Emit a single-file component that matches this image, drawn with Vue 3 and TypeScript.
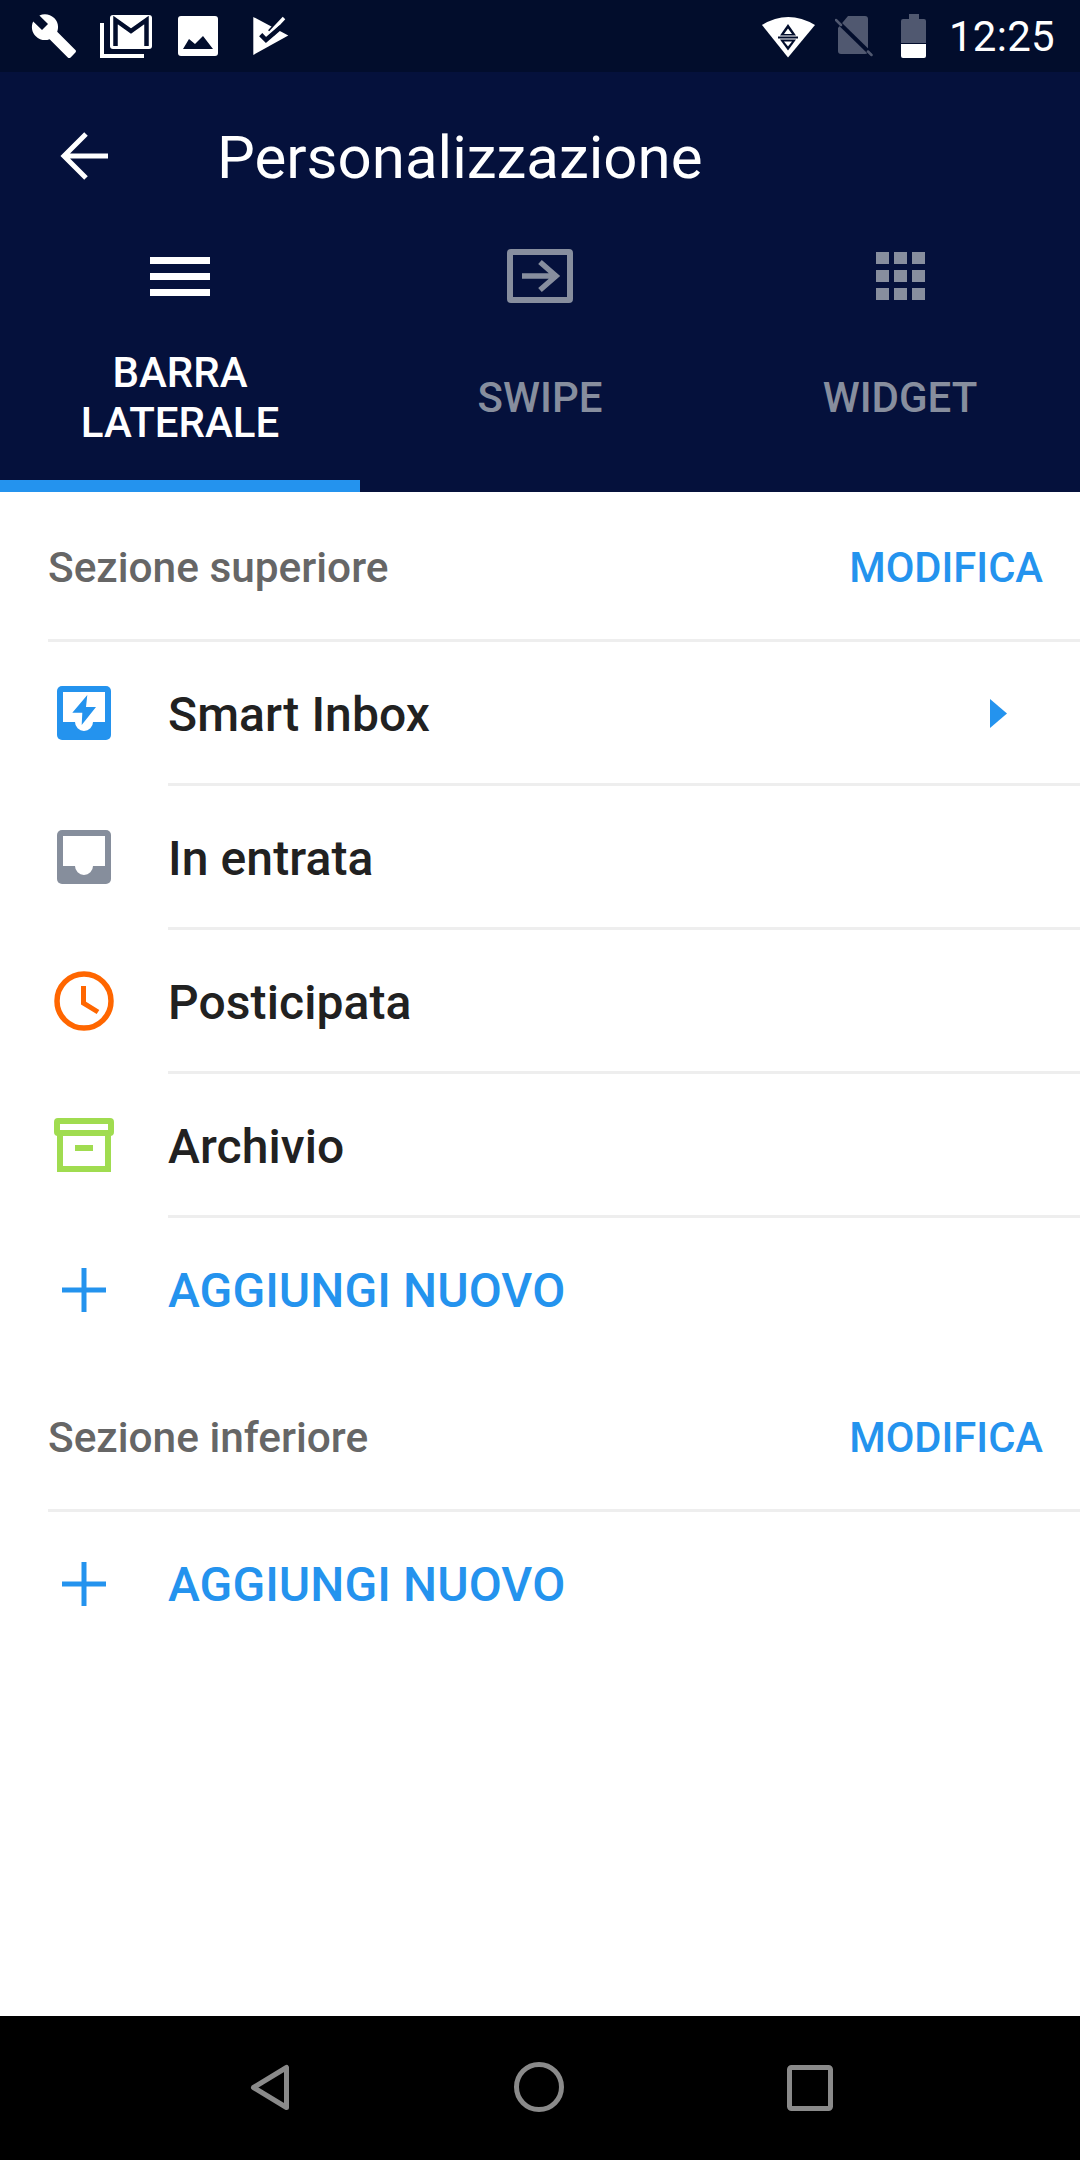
<script setup lang="ts">
interface MenuItem {
  id: string;
  label: string;
  hasArrow?: boolean;
}

const topItems: MenuItem[] = [
  { id: 'smart', label: 'Smart Inbox', hasArrow: true },
  { id: 'inbox', label: 'In entrata' },
  { id: 'snooze', label: 'Posticipata' },
  { id: 'archive', label: 'Archivio' },
];
</script>

<template>
  <div class="page">
    <div class="status-bar">
      <div class="status-left">
        <svg class="st-wrench" width="48" height="48" viewBox="0 0 24 24">
          <path fill="#fff" d="M22.7 19l-9.1-9.1c.9-2.3.4-5-1.5-6.9-2-2-5-2.4-7.4-1.3L9 6 6 9 1.6 4.7C.4 7.1.9 10.1 2.9 12.1c1.9 1.9 4.6 2.4 6.9 1.5l9.1 9.1c.4.4 1 .4 1.4 0l2.3-2.3c.5-.4.5-1.1.1-1.4z" />
        </svg>
        <svg class="st-gmail" width="52" height="44" viewBox="0 0 52 44">
          <path fill="none" stroke="#fff" stroke-width="4" d="M2 9V42H44" />
          <rect x="10" y="1" width="42" height="34" rx="3" fill="#fff" />
          <path fill="none" stroke="#020d2c" stroke-width="4.5" d="M15.5 32V6L31 17 46.500 6V32" />
        </svg>
        <svg class="st-image" width="40" height="40" viewBox="0 0 40 40">
          <rect width="40" height="40" rx="3" fill="#fff" />
          <path fill="#020d2c" d="M5 33 11 23 17 28 25 20 35 33Z" />
        </svg>
        <svg class="st-check" width="38" height="40" viewBox="0 0 38 40">
          <path fill="#fff" d="M1.300 1 36.300 19.500 1.300 39Z" />
          <path fill="none" stroke="#020d2c" stroke-width="8" d="M31 4 19 17" />
          <path fill="none" stroke="#fff" stroke-width="3.500" d="M32 2 18 17" />
          <path fill="none" stroke="#020d2c" stroke-width="4.500" d="M8.700 18.700 14 24 29 11" />
        </svg>
      </div>
      <div class="status-right">
        <svg class="st-wifi" width="53" height="43" viewBox="0 0 53 43">
          <path fill="#fff" d="M0 10Q26-6 53 10L26 42.500Z" />
          <path fill="#020d2c" d="M26 9 34 20.500H18Z" />
          <path fill="#fff" d="M26 13.500 30 19H22Z" />
          <rect x="16" y="21.500" width="20" height="2" fill="#020d2c" />
          <path fill="#020d2c" d="M18 24.500H34L26 35.500Z" />
          <path fill="#fff" d="M22 26.500H30L26 31.500Z" />
        </svg>
        <svg class="st-sim" width="38" height="44" viewBox="0 0 38 44">
          <path fill="#505870" d="M13 2H30Q33 2 33 5V37Q33 40 30 40H6Q3 40 3 37V14Z" />
          <path fill="none" stroke="#020d2c" stroke-width="4" d="M0 5 37 41" />
          <path fill="none" stroke="#505870" stroke-width="2.500" stroke-linecap="round" d="M1 6 6 11M33 37.500 36.500 41" />
        </svg>
        <svg class="st-battery" width="25" height="44" viewBox="0 0 25 44">
          <path fill="#505870" d="M8 0H18V5H23Q25 5 25 7V29H0V7Q0 5 2 5H8Z" />
          <path fill="#fff" d="M0 30H25V42Q25 44 23 44H2Q0 44 0 42Z" />
        </svg>
        <span class="time">12:25</span>
      </div>
    </div>

    <div class="toolbar">
      <svg class="back" width="48" height="48" viewBox="0 0 48 48">
        <path fill="none" stroke="#fff" stroke-width="5" d="M48 24H4M26 2 4 24 26 46" />
      </svg>
      <span class="title">Personalizzazione</span>
    </div>

    <div class="tabs">
      <div class="tab active">
        <div class="tab-icon">
          <svg width="60" height="39" viewBox="0 0 60 39">
            <path fill="#fff" d="M0 0H60V7H0ZM0 16H60V23H0ZM0 32H60V39H0Z" />
          </svg>
        </div>
        <div class="tab-label">BARRA<br />LATERALE</div>
      </div>
      <div class="tab">
        <div class="tab-icon">
          <svg width="66" height="54" viewBox="0 0 66 54">
            <rect x="3" y="3" width="60" height="48" rx="1" fill="none" stroke="#878e9e" stroke-width="6" />
            <path fill="none" stroke="#878e9e" stroke-width="5.500" d="M15 27H49M33 13 49 27 33 41" />
          </svg>
        </div>
        <div class="tab-label">SWIPE</div>
      </div>
      <div class="tab">
        <div class="tab-icon">
          <svg width="49" height="48" viewBox="0 0 49 48">
            <path fill="#878e9e" d="M0 0H13V12H0ZM18 0H31V12H18ZM36 0H49V12H36ZM0 18H13V30H0ZM18 18H31V30H18ZM36 18H49V30H36ZM0 36H13V48H0ZM18 36H31V48H18ZM36 36H49V48H36Z" />
          </svg>
        </div>
        <div class="tab-label">WIDGET</div>
      </div>
    </div>

    <div class="content">
      <div class="section-head">
        <span class="section-title">Sezione superiore</span>
        <span class="section-action">MODIFICA</span>
      </div>
      <div v-for="item in topItems" :key="item.id" class="row">
        <div class="row-icon">
          <svg v-if="item.id === 'smart'" width="54" height="54" viewBox="0 0 54 54">
            <rect width="54" height="54" rx="5" fill="#2493ee" />
            <path fill="#fff" d="M6 6H48V36H36A9 9 0 0 1 18 36H6Z" />
            <path fill="#2493ee" d="M30.300 9 15.300 26.700H25.300L24.700 39 39 21H29Z" />
          </svg>
          <svg v-else-if="item.id === 'inbox'" width="54" height="54" viewBox="0 0 54 54">
            <rect width="54" height="54" rx="5" fill="#868e9c" />
            <path fill="#fff" d="M6 6H48V36H36A9 9 0 0 1 18 36H6Z" />
          </svg>
          <svg v-else-if="item.id === 'snooze'" width="60" height="60" viewBox="0 0 60 60">
            <circle cx="30" cy="30" r="27" fill="none" stroke="#ff6600" stroke-width="5.500" />
            <path fill="none" stroke="#ff6600" stroke-width="5" d="M29.500 15V32L44 41" />
          </svg>
          <svg v-else width="60" height="54" viewBox="0 0 60 54">
            <rect x="3" y="3" width="54" height="12" rx="1" fill="none" stroke="#a0dc50" stroke-width="6" />
            <path fill="none" stroke="#a0dc50" stroke-width="6" d="M6 16V51H54V16" />
            <rect x="21" y="27" width="18" height="6" fill="#a0dc50" />
          </svg>
        </div>
        <div class="row-body">
          <span class="row-label">{{ item.label }}</span>
          <svg v-if="item.hasArrow" class="row-arrow" width="17" height="29" viewBox="0 0 17 29">
            <path fill="#2493ee" d="M0 0 17 14.500 0 29Z" />
          </svg>
        </div>
      </div>
      <div class="row add">
        <div class="row-icon">
          <svg width="44" height="44" viewBox="0 0 44 44">
            <path fill="none" stroke="#2493ee" stroke-width="5" d="M22 0V44M0 22H44" />
          </svg>
        </div>
        <span class="add-label">AGGIUNGI NUOVO</span>
      </div>

      <div class="section-head">
        <span class="section-title">Sezione inferiore</span>
        <span class="section-action">MODIFICA</span>
      </div>
      <div class="row add">
        <div class="row-icon">
          <svg width="44" height="44" viewBox="0 0 44 44">
            <path fill="none" stroke="#2493ee" stroke-width="5" d="M22 0V44M0 22H44" />
          </svg>
        </div>
        <span class="add-label">AGGIUNGI NUOVO</span>
      </div>
    </div>

    <div class="nav-bar">
      <svg width="60" height="52" viewBox="0 0 60 52">
        <path fill="none" stroke="#8a8a8a" stroke-width="5" stroke-linejoin="round" d="M13.500 25.500 46.500 5.500V45.500Z" />
      </svg>
      <svg width="60" height="52" viewBox="0 0 60 52">
        <circle cx="29" cy="25" r="22.500" fill="none" stroke="#8a8a8a" stroke-width="5" />
      </svg>
      <svg width="60" height="52" viewBox="0 0 60 52">
        <rect x="9.500" y="5.500" width="41" height="41" rx="2" fill="none" stroke="#8a8a8a" stroke-width="5" />
      </svg>
    </div>
  </div>
</template>

<style scoped>
.page {
  display: flex;
  flex-direction: column;
  width: 1080px;
  height: 2160px;
  background: #fff;
  font-family: Roboto, sans-serif;
  overflow: hidden;
}

svg {
  display: block;
  flex: none;
}

.status-bar {
  display: flex;
  justify-content: space-between;
  align-items: center;
  height: 72px;
  padding: 0 25px 0 30px;
  background: #020d2c;
}

.status-left,
.status-right {
  display: flex;
  align-items: center;
}

.st-gmail {
  margin-left: 22px;
}

.st-image {
  margin-left: 26px;
}

.st-check {
  margin-left: 34px;
}

.st-sim {
  margin-left: 20px;
}

.st-battery {
  margin-left: 28px;
}

.time {
  margin-left: 23px;
  font-size: 42px;
  letter-spacing: 0.3px;
  color: #fff;
}

.toolbar {
  display: flex;
  align-items: center;
  height: 168px;
  padding-left: 60px;
  background: #05113c;
}

.title {
  margin-left: 109px;
  padding-top: 3px;
  font-size: 60px;
  color: #fff;
}

.tabs {
  display: flex;
  background: #05113c;
}

.tab {
  display: flex;
  flex: 1;
  flex-direction: column;
  align-items: center;
  height: 252px;
  border-bottom: 12px solid transparent;
  box-sizing: border-box;
}

.tab.active {
  border-bottom-color: #2493ee;
}

.tab-icon {
  display: flex;
  justify-content: center;
  align-items: center;
  height: 72px;
}

.tab-label {
  display: flex;
  flex: 1;
  align-items: center;
  padding-top: 3px;
  text-align: center;
  font-size: 42px;
  font-weight: 500;
  line-height: 50px;
  color: #878e9e;
}

.tab.active .tab-label {
  color: #fff;
}

.content {
  flex: 1;
}

.section-head {
  display: flex;
  justify-content: space-between;
  align-items: center;
  box-sizing: border-box;
  height: 150px;
  margin-left: 48px;
  padding: 3px 37px 0 0;
  border-bottom: 3px solid #eeeeee;
}

.section-title {
  font-size: 42.4px;
  font-weight: 500;
  color: #666666;
}

.section-action {
  font-size: 41.7px;
  font-weight: 500;
  color: #2493ee;
}

.row {
  display: flex;
  align-items: center;
  height: 144px;
}

.row-icon {
  display: flex;
  flex: none;
  justify-content: center;
  align-items: center;
  width: 168px;
}

.row:not(.add) .row-icon {
  padding-bottom: 2px;
}

.row-body {
  display: flex;
  flex: 1;
  justify-content: space-between;
  align-items: center;
  height: 100%;
  box-sizing: border-box;
  padding: 3px 73px 0 0;
  border-bottom: 3px solid #eeeeee;
}

.row-arrow {
  margin-top: -2px;
}

.row-label {
  font-size: 48px;
  font-weight: 500;
  letter-spacing: 0.1px;
  color: #212121;
}

.add-label {
  font-size: 48px;
  font-weight: 500;
  letter-spacing: 0.1px;
  color: #2493ee;
}

.nav-bar {
  display: flex;
  justify-content: center;
  align-items: center;
  gap: 210px;
  height: 144px;
  background: #000;
}
</style>
